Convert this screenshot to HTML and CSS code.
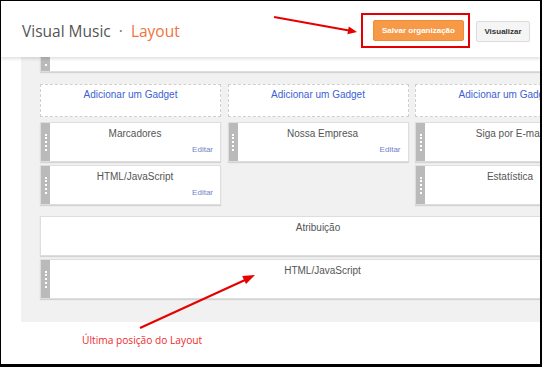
FILE: index.html
```html
<!DOCTYPE html>
<html lang="pt-BR">
<head>
    <meta charset="UTF-8">
    <meta name="viewport" content="width=device-width, initial-scale=1.0">
    <title>Visual Music · Layout</title>
    <link rel="stylesheet" href="styles.css">
</head>
<body>
    <div class="frame">
        <header class="topbar">
            <h1 class="title">Visual Music <span class="sep">·</span> <span class="page">Layout</span></h1>
            <div class="actions">
                <button class="btn btn-save">Salvar organização</button>
                <button class="btn btn-preview">Visualizar</button>
            </div>
        </header>

        <main class="layout-panel">
            <div class="widget widget-cut"><span class="handle"></span></div>

            <div class="columns">
                <div class="col">
                    <div class="add-gadget">Adicionar um Gadget</div>
                    <div class="widget">
                        <span class="handle"></span>
                        <div class="widget-body">
                            <span class="widget-title">Marcadores</span>
                            <a class="edit">Editar</a>
                        </div>
                    </div>
                    <div class="widget">
                        <span class="handle"></span>
                        <div class="widget-body">
                            <span class="widget-title">HTML/JavaScript</span>
                            <a class="edit">Editar</a>
                        </div>
                    </div>
                </div>

                <div class="col">
                    <div class="add-gadget">Adicionar um Gadget</div>
                    <div class="widget">
                        <span class="handle"></span>
                        <div class="widget-body">
                            <span class="widget-title">Nossa Empresa</span>
                            <a class="edit">Editar</a>
                        </div>
                    </div>
                </div>

                <div class="col">
                    <div class="add-gadget">Adicionar um Gadget</div>
                    <div class="widget">
                        <span class="handle"></span>
                        <div class="widget-body">
                            <span class="widget-title">Siga por E-mail</span>
                        </div>
                    </div>
                    <div class="widget">
                        <span class="handle"></span>
                        <div class="widget-body">
                            <span class="widget-title">Estatística</span>
                        </div>
                    </div>
                </div>
            </div>

            <div class="widget widget-wide locked">
                <div class="widget-body">
                    <span class="widget-title">Atribuição</span>
                </div>
            </div>
            <div class="widget widget-wide">
                <span class="handle"></span>
                <div class="widget-body">
                    <span class="widget-title">HTML/JavaScript</span>
                </div>
            </div>
        </main>

        <p class="note">Última posição do Layout</p>

        <!-- anotações em vermelho -->
        <svg class="marks" width="542" height="367" viewBox="0 0 542 367">
            <rect x="362" y="14" width="107" height="33" fill="none" stroke="#e40000" stroke-width="2"/>
            <line x1="274" y1="17" x2="349" y2="30.5" stroke="#e60000" stroke-width="2"/>
            <polygon points="357,32 348.8,26.5 347.4,34.3" fill="#e60000"/>
            <line x1="140" y1="328" x2="245" y2="280" stroke="#e60000" stroke-width="2"/>
            <polygon points="255,275 246,284.1 242.2,275.9" fill="#e60000"/>
        </svg>
    </div>
</body>
</html>
```

FILE: styles.css
```css
* {
    margin: 0;
    padding: 0;
    box-sizing: border-box;
}

body {
    background: #fff;
    font-family: 'Liberation Sans', Arial, sans-serif;
    overflow: hidden;
}

.frame {
    position: relative;
    width: 542px;
    height: 367px;
    border-style: solid;
    border-color: #000;
    border-width: 1px 2px 3px 1px;
    overflow: hidden;
    background: #fff;
}

/* cabeçalho */
.topbar {
    position: relative;
    z-index: 1;
    height: 56px;
    display: flex;
    align-items: center;
    justify-content: space-between;
    padding: 0 10px 0 21px;
    background: #fff;
    box-shadow: 0 2px 3px rgba(0, 0, 0, 0.12);
}

.title {
    font-family: 'Open Sans', sans-serif;
    font-weight: 400;
    font-size: 15.5px;
    color: #555;
    margin-top: 3px;
}

.title .sep {
    color: #777;
    margin: 0 4px;
}

.title .page {
    color: #f0743a;
}

.actions {
    display: flex;
    align-items: center;
    gap: 12px;
    margin-top: 3px;
}

.btn {
    font-family: 'Liberation Sans', Arial, sans-serif;
    font-weight: 700;
    font-size: 8px;
    height: 21px;
    border-radius: 2px;
    cursor: pointer;
}

.btn-save {
    width: 91px;
    background: #f69a48;
    color: #fff;
    border: 1px solid #ef8d38;
}

.btn-preview {
    width: 54px;
    background: #f5f5f5;
    color: #333;
    border: 1px solid #dcdcdc;
    margin-top: 1px;
}

/* painel do layout */
.layout-panel {
    width: 600px;
    margin-left: 20px;
    padding: 0 0 23px 19px;
    background: #f1f1f1;
}

.widget {
    display: flex;
    height: 40px;
    background: #fff;
    border: 1px solid #dedede;
    box-shadow: 0 1px 1px rgba(0, 0, 0, 0.12);
    margin-top: 3px;
}

.widget-cut {
    height: 15px;
    margin-top: 0;
    border-top: none;
}

.widget-cut .handle::before {
    height: 2px;
    margin-top: 2px;
}

.handle {
    flex: 0 0 9px;
    background: #bababa;
    display: flex;
    align-items: center;
    justify-content: center;
}

.handle::before {
    content: "";
    width: 0;
    height: 17px;
    border-left: 2px dotted #fff;
}

.widget-body {
    flex: 1;
    display: flex;
    flex-direction: column;
    align-items: center;
    padding: 5px 7px 0;
}

.widget-title {
    font-size: 10px;
    line-height: 12px;
    color: #555;
}

.edit {
    align-self: flex-end;
    margin-top: 5px;
    font-size: 8px;
    color: #6f84c8;
}

.columns {
    display: grid;
    grid-template-columns: 181px 181px 181px;
    column-gap: 6.5px;
    margin-top: 12px;
}

.col {
    display: flex;
    flex-direction: column;
}

.add-gadget {
    height: 33px;
    margin-bottom: 2px;
    border: 1px dashed #cfcfcf;
    background: #fff;
    text-align: center;
    padding-top: 4px;
    font-size: 10px;
    line-height: 12px;
    color: #3d5fd1;
}

.widget-wide {
    width: 556px;
}

.locked {
    margin-top: 11px;
}

/* anotação */
.note {
    margin: 11px 0 0 81px;
    font-family: 'Open Sans', sans-serif;
    font-size: 10.2px;
    color: #ee2a2a;
}

.marks {
    position: absolute;
    z-index: 2;
    left: -1px;
    top: -1px;
    pointer-events: none;
}
```
